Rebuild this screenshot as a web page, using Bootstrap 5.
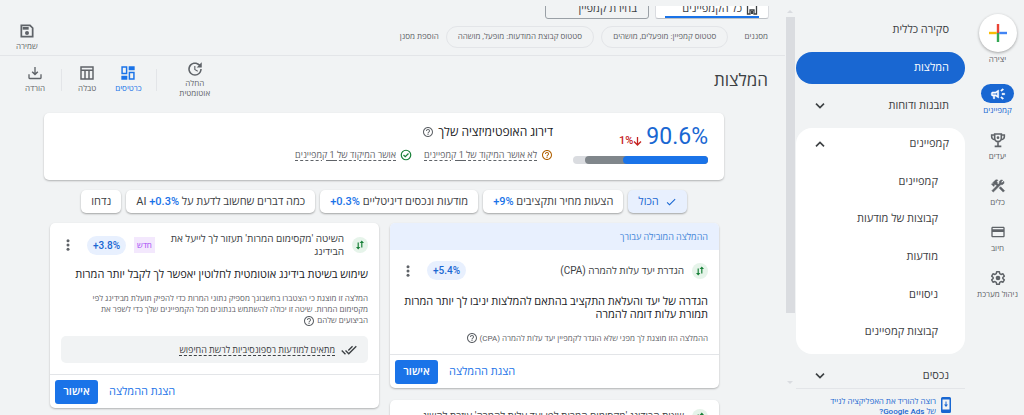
<!DOCTYPE html>
<html lang="he" dir="rtl">
<head>
<meta charset="utf-8">
<meta name="viewport" content="width=device-width, initial-scale=1">
<title>המלצות</title>
<link rel="stylesheet" href="https://cdn.jsdelivr.net/npm/bootstrap@5.3.0/dist/css/bootstrap.min.css">
<style>
:root{--blue:#1a73e8;--deep:#1967d2;--ink:#3c4043;--grey:#5f6368;--line:#e3e5e8;--pale:#e8f0fe}
body{background:#f1f3f4;color:var(--ink);font-family:Roboto,"Open Sans","Noto Sans",sans-serif;font-size:11px;line-height:14px}
a{color:inherit;text-decoration:none}
svg{fill:currentColor;flex:none;display:block}
.ic{width:16px;height:16px}
.ic-s{width:12px;height:12px}
.ltr{direction:ltr;unicode-bidi:isolate}
button{color:inherit}
.plain{border:0;background:none;padding:0}
.mb-6{margin-bottom:6px}
.gap-6{gap:6px}
.gap-2px{gap:2px}
.gap-12{gap:12px}
.push-end{margin-inline-start:auto}

.rail{width:59px;padding-top:14px;color:var(--grey);font-size:8px;line-height:12px}
.rail-item{margin-bottom:13px;width:53px;white-space:nowrap;gap:2px}
.rail-icon{width:33px;height:19px;border-radius:10px}
.rail-item.on{color:var(--deep)}
.rail-item.on .rail-icon{background:var(--deep);color:#fff}
.rail-item.create-item{margin-bottom:18px}
.create-icon{width:38px;height:38px;box-shadow:0 1px 3px #0005}

.side{width:169px;font-weight:500}
.side-list{padding-top:14px;min-height:0}
.side-row{height:32px;padding:0 16px;border-radius:16px;width:100%}
.side-row.on{background:var(--deep);color:#fff}
.side-group{border-radius:16px;padding-bottom:3px}
.side-sub{display:grid;grid-auto-rows:1fr;height:188px;margin-top:3px;padding:0 27px}
.side-foot{height:27px;border-top:1px solid var(--line);color:var(--deep);font-size:8px;line-height:10px;padding:8px 13px 0}
.track{width:11px;padding:10px 1px 31px 0;color:#dadce0}
.thumb{height:296px;width:9px;background:#dadce0}

.tabs-row{margin:6px 16px 0 0;height:13px}
.scope{height:20px;border-radius:3px}
.scope-all{width:114px;padding:0 10px;border:1px solid #dadce0;border-bottom-color:#bdc1c6}
.scope-line{position:absolute;bottom:0;left:9px;right:9px;height:2px;background:var(--blue)}
.scope-pick{width:104px;border:1px solid #9aa0a6;padding:0 11px}
.filters{height:37px;border-bottom:1px solid var(--line);padding:0 17px 0 16px;color:var(--grey);font-size:8px}
.filter-pill{height:22px;border:1px solid var(--line);border-radius:11px;padding:0 11px}
.pill-first{margin-inline-start:16px}
.pill-next{margin-inline-start:7px}
.save{gap:4px}
.tool{font-size:8px;line-height:10px;color:var(--grey);gap:3px}
.tool.on{color:var(--blue)}
.head{height:57px;padding:0 17px 10px 25px}
.head h1{font-size:17px;line-height:20px;margin:0;color:var(--ink)}
.tool-sep{width:1px;height:22px;background:var(--line)}
.tool-auto{width:44px;gap:1px}
.sep-wide{margin:0 16px 0 14px}
.sep-slim{margin:0 16px}
.tool-next{margin-inline-start:19px}

.content{padding:0 61px 0 44px}
.panel{background:#fff;border-radius:5px;box-shadow:0 1px 2px #0004}
.score{height:67px;padding:11px 16px 0}
.score-num{font-size:23px;line-height:26px;color:var(--deep)}
.score-bar{width:135px;height:8px;border-radius:4px;background:#dadce0;margin-top:6px}
.score-bar .today,.score-bar .base{background:#80868b;border-radius:4px;height:8px}
.score-bar .base{background:var(--blue)}
.score h2{font-size:12px;line-height:16px;margin:0;color:#202124}
.score h2 svg{color:var(--grey)}
.score-text{margin-inline-start:20px}
.drop{color:#c5221f;font-weight:500;padding-bottom:2px}
.checks{gap:12px;margin-top:8px;font-size:9px;color:var(--grey)}
.amber{color:#b06000}
.green{color:#188038}
.dash{text-decoration:underline dashed;text-underline-offset:2px}
.topics{gap:5px;margin-top:10px}
.topic{height:23px;padding:0 10px;border:0;border-radius:5px;background:#fff;box-shadow:0 1px 2px #0005;white-space:nowrap}
.topic.on{background:var(--pale);color:var(--deep)}
.topic .ltr{color:var(--blue);font-weight:500}
.reco-grid{display:grid;grid-template-columns:1fr 1fr;gap:12px 11px;padding:0 5px 0 6px;margin-top:10px}
.lead-band{height:27px;background:var(--pale);color:#4285d8;padding:0 11px;font-size:9px}
.kind{width:16px;height:16px;background:#e6f4ea;color:#188038}
.gain{height:19px;padding:0 6px;border-radius:10px;background:var(--pale);color:var(--deep);font-weight:500}
.new-tag{background:#f3e8fd;color:#a142f4;height:16px;padding:0 3px;font-size:8px}
.reco-body{padding:0 11px}
.reco-top{font-size:10px;line-height:13px;padding-left:1px;gap:8px}
.reco-body h3{font-size:11px;line-height:13px;font-weight:500;margin:0;color:#202124}
.reco-body p{font-size:8px;line-height:11px;margin:0;color:var(--grey);max-width:290px}
.more{color:var(--grey);margin-inline-start:5px}
.one{padding-top:11px;padding-bottom:10px}
.one h3{margin-top:15px}
.one p{margin-top:11px}
.two{padding-top:9px;padding-bottom:11px}
.two h3{margin-top:10px}
.two p{margin-top:12px;margin-bottom:9px}
.two p svg{vertical-align:top}
.three{padding-top:9px;padding-bottom:40px}
.kind-name{max-width:175px}
.fit{height:27px;border-radius:5px;background:#f1f3f4;padding:0 11px;font-size:9px;gap:6px}
.reco-foot{height:34px;border-top:1px solid var(--line);padding-left:5px;gap:11px;color:var(--blue);font-weight:500;justify-content:flex-end}
.approve{width:43px;height:24px;background:var(--blue);color:#fff;border:0;border-radius:3px;padding:0;font-weight:600}
</style>
</head>
<body>
<svg width="0" height="0" class="position-absolute" aria-hidden="true">
<symbol id="help" viewBox="0 0 24 24"><path d="M11 18h2v-2h-2v2zm1-16C6.480 2 2 6.480 2 12s4.480 10 10 10 10-4.480 10-10S17.520 2 12 2zm0 18c-4.410 0-8-3.590-8-8s3.590-8 8-8 8 3.590 8 8-3.590 8-8 8zm0-14c-2.210 0-4 1.790-4 4h2c0-1.100.9-2 2-2s2 .9 2 2c0 2-3 1.750-3 5h2c0-2.250 3-2.500 3-5 0-2.210-1.790-4-4-4z"/></symbol>
<symbol id="down" viewBox="0 0 24 24"><path d="M6 8.500l6 6 6-6" fill="none" stroke="currentColor" stroke-width="2.400"/></symbol>
<symbol id="up" viewBox="0 0 24 24"><path d="M6 15.500l6-6 6 6" fill="none" stroke="currentColor" stroke-width="2.400"/></symbol>
<symbol id="dots" viewBox="0 0 24 24"><circle cx="12" cy="3.500" r="3"/><circle cx="12" cy="12" r="3"/><circle cx="12" cy="20.500" r="3"/></symbol>
<symbol id="swap" viewBox="0 0 16 16"><path d="M9.800 3.500 12 6h-1.600v4.500H9.200V6H7.600zM6.200 12.500 4 10h1.600V5.500h1.200V10h1.600z"/></symbol>
</svg>
<div class="d-flex vh-100 overflow-hidden">
  <nav class="rail d-flex flex-column flex-shrink-0" aria-label="ראשי">
    <button class="plain rail-item create-item d-flex flex-column align-items-center"><span class="create-icon rounded-circle bg-white d-flex align-items-center justify-content-center"><svg width="18" height="18" viewBox="0 0 18 18"><path fill="#ea4335" d="M7.800 0h2.400v9H7.800z"/><path fill="#fbbc04" d="M0 7.800h7.800v2.400H0z"/><path fill="#34a853" d="M7.800 9h2.400v9H7.800z"/><path fill="#4285f4" d="M10.200 7.800H18v2.400h-7.800z"/></svg></span>יצירה</button>
    <a href="#" class="rail-item on d-flex flex-column align-items-center"><span class="rail-icon d-flex align-items-center justify-content-center"><svg class="ic" viewBox="0 0 24 24"><path stroke="currentColor" stroke-width=".8" d="M18 11v2h4v-2h-4zm-2 6.610c.96.710 2.210 1.650 3.200 2.390.4-.530.8-1.070 1.200-1.600-.99-.740-2.240-1.680-3.200-2.400-.4.540-.8 1.080-1.200 1.610zM20.400 5.600c-.4-.530-.8-1.070-1.200-1.600-.99.740-2.240 1.680-3.200 2.400.4.530.8 1.070 1.200 1.600.96-.720 2.210-1.650 3.200-2.400zM4 9c-1.100 0-2 .9-2 2v2c0 1.100.9 2 2 2h1v4h2v-4h1l5 3V6L8 9H4zm5.030 1.710L11 9.530v4.940l-1.970-1.180-.48-.290H4v-2h4.550l.48-.290z"/></svg></span><span>קמפיינים</span></a>
    <a href="#" class="rail-item d-flex flex-column align-items-center"><span class="rail-icon d-flex align-items-center justify-content-center"><svg class="ic" viewBox="0 0 24 24"><path fill="none" stroke="currentColor" stroke-width="2.400" d="M7 3h10v6.500a5 5 0 0 1-10 0zM7 4.500H2.500V7A4.500 4.500 0 0 0 7 11.500M17 4.500h4.500V7a4.500 4.500 0 0 1-4.500 4.500M12 15v6M7 21.500h10"/><circle cx="12" cy="8.500" r="2"/></svg></span><span>יעדים</span></a>
    <a href="#" class="rail-item d-flex flex-column align-items-center"><span class="rail-icon d-flex align-items-center justify-content-center"><svg class="ic" viewBox="0 0 24 24"><path stroke="currentColor" stroke-width=".8" d="M13.780 15.170l2.120-2.120 6 6-2.120 2.120zM17.500 10c1.930 0 3.500-1.570 3.500-3.500 0-.580-.160-1.120-.410-1.600l-2.700 2.700-1.490-1.490 2.700-2.700c-.480-.250-1.020-.410-1.600-.410C15.570 3 14 4.570 14 6.500c0 .410.080.8.210 1.160l-1.850 1.850-1.780-1.780.710-.710-1.410-1.410L12 3.490c-1.170-1.170-3.070-1.170-4.240 0L4.220 7.030l1.410 1.410H2.810l-.710.710 3.540 3.540.710-.710V9.150l1.410 1.410.710-.710 1.780 1.780-7.410 7.410 2.120 2.120L16.340 9.790c.360.130.750.210 1.160.210z"/></svg></span><span>כלים</span></a>
    <a href="#" class="rail-item d-flex flex-column align-items-center"><span class="rail-icon d-flex align-items-center justify-content-center"><svg class="ic" viewBox="0 0 24 24"><path d="M20 4H4c-1.110 0-1.990.890-1.990 2L2 18c0 1.110.890 2 2 2h16c1.110 0 2-.890 2-2V6c0-1.110-.890-2-2-2zm0 14H4v-6h16v6zm0-10H4V6h16v2z"/></svg></span><span>חיוב</span></a>
    <a href="#" class="rail-item d-flex flex-column align-items-center"><span class="rail-icon d-flex align-items-center justify-content-center"><svg class="ic" viewBox="0 0 24 24"><path fill="none" stroke="currentColor" stroke-width="2.200" stroke-linejoin="round" d="M10 2.500h4l.6 3 2 1.200 2.900-1 2 3.500-2.300 2v1.600l2.300 2-2 3.500-2.900-1-2 1.200-.6 3h-4l-.6-3-2-1.200-2.900 1-2-3.500 2.300-2v-1.600l-2.300-2 2-3.500 2.900 1 2-1.200z"/><circle cx="12" cy="12" r="3.500"/></svg></span><span>ניהול מערכת</span></a>
  </nav>

  <aside class="side d-flex flex-column flex-shrink-0">
    <div class="side-list flex-grow-1 overflow-hidden">
      <a href="#" class="side-row d-flex align-items-center mb-6">סקירה כללית</a>
      <a href="#" class="side-row on d-flex align-items-center mb-6">המלצות</a>
      <button class="plain side-row d-flex align-items-center justify-content-between mb-6">תובנות ודוחות<svg class="ic" viewBox="0 0 24 24"><use href="#down"/></svg></button>
      <div class="side-group bg-white mb-6">
        <button class="plain side-row d-flex align-items-center justify-content-between">קמפיינים<svg class="ic" viewBox="0 0 24 24"><use href="#up"/></svg></button>
        <div class="side-sub align-items-center">
          <a href="#">קמפיינים</a><a href="#">קבוצות של מודעות</a><a href="#">מודעות</a><a href="#">ניסויים</a><a href="#">קבוצות קמפיינים</a>
        </div>
      </div>
      <button class="plain side-row d-flex align-items-center justify-content-between">נכסים<svg class="ic" viewBox="0 0 24 24"><use href="#down"/></svg></button>
    </div>
    <a href="#" class="side-foot d-flex gap-1 align-items-start overflow-hidden flex-shrink-0"><svg width="12" height="16" viewBox="0 0 12 16"><path fill-rule="evenodd" d="M2.500 0h7A1.500 1.500 0 0 1 11 1.500v13A1.500 1.500 0 0 1 9.500 16h-7A1.500 1.500 0 0 1 1 14.500v-13A1.500 1.500 0 0 1 2.500 0zM2.500 2.500v10h7v-10zM5.500 4.500h1v3H8L6 10 4 7.500h1.500z"/></svg><span>רוצה להוריד את האפליקציה לנייד<br>של Google Ads?</span></a>
  </aside>

  <div class="track d-flex flex-column flex-shrink-0 align-items-center" aria-hidden="true">
    <svg width="6" height="3" viewBox="0 0 6 3"><path d="M0 3 3 0l3 3z"/></svg>
    <div class="thumb mt-1"></div>
    <svg class="mt-auto" width="6" height="3" viewBox="0 0 6 3"><path d="M0 0h6L3 3z"/></svg>
  </div>

  <main class="flex-grow-1 overflow-hidden">
    <div class="tabs-row d-flex align-items-end overflow-hidden gap-6">
      <button class="plain scope scope-all bg-white position-relative d-flex align-items-center gap-1"><svg width="12" height="12" viewBox="0 0 12 12"><path fill="none" stroke="currentColor" stroke-width="1.300" d="M1.500 0v11h2.500V7h4v4h2.500V0"/><path d="M5 8h2v3H5z"/></svg>כל הקמפיינים<span class="scope-line"></span></button>
      <button class="plain scope scope-pick d-flex align-items-center">בחירת קמפיין</button>
    </div>
    <div class="filters d-flex align-items-center">
      <span>מסננים</span>
      <button class="plain filter-pill pill-first">סטטוס קמפיין: מופעלים, מושהים</button>
      <button class="plain filter-pill pill-next">סטטוס קבוצת המודעות: מופעל, מושהה</button>
      <button class="plain pill-next">הוספת מסנן</button>
      <button class="plain tool save d-flex flex-column align-items-center push-end"><svg class="ic" viewBox="0 0 24 24"><path fill="none" stroke="currentColor" stroke-width="2.600" d="M3.500 3.500h13l4 4v13h-17z"/><path d="M5.500 6h9v4h-9z"/><circle cx="12" cy="15" r="3"/></svg>שמירה</button>
    </div>
    <header class="head d-flex align-items-center">
      <h1>המלצות</h1>
      <button class="plain tool tool-auto push-end d-flex flex-column align-items-center"><svg width="18" height="18" viewBox="0 0 24 24"><path d="M21 10.120h-6.780l2.740-2.820c-2.730-2.700-7.150-2.800-9.880-.1-2.730 2.710-2.730 7.080 0 9.790s7.150 2.710 9.880 0C18.320 15.650 19 14.080 19 12.100h2c0 1.980-.880 4.550-2.640 6.290-3.510 3.480-9.210 3.480-12.720 0-3.500-3.470-3.530-9.110-.020-12.580s9.140-3.470 12.650 0L21 3v7.120zM12.500 8v4.250l3.500 2.080-.720 1.210L11 13V8h1.500z"/></svg>החלה אוטומטית</button>
      <span class="tool-sep sep-wide"></span>
      <button class="plain tool on d-flex flex-column align-items-center"><svg class="ic" viewBox="0 0 24 24"><path d="M13 2h9v6h-9zM2 16h9v6H2z"/><path fill="none" stroke="currentColor" stroke-width="2.200" d="M3.100 3.100h6.800v9.800H3.100zM14.100 11.100h6.800v9.800h-6.800z"/></svg>כרטיסים</button>
      <button class="plain tool d-flex flex-column align-items-center tool-next"><svg class="ic" viewBox="0 0 24 24"><path fill="none" stroke="currentColor" stroke-width="2.200" d="M3 3h18v18H3zM3 8h18M9 8v13M15 8v13"/></svg>טבלה</button>
      <span class="tool-sep sep-slim"></span>
      <button class="plain tool d-flex flex-column align-items-center"><svg class="ic" viewBox="0 0 24 24"><path d="M20 14v5H4v-5H2v5c0 1.300.9 2.200 2 2.200h16c1.100 0 2-.9 2-2.200v-5zm-3-3.200-1.500-1.500L13 11.800V3h-2v8.800L8.500 9.300 7 10.800l5 5z"/></svg>הורדה</button>
    </header>

    <div class="content">
      <section class="panel score d-flex align-items-start">
        <div>
          <div class="d-flex align-items-end gap-1"><span class="score-num ltr">90.6%</span><span class="drop d-flex align-items-center"><svg width="9" height="10" viewBox="0 0 9 10"><path fill="none" stroke="currentColor" stroke-width="1.300" d="M4.500 1v8M1 5.500 4.500 9 8 5.500"/></svg><span class="ltr">1%</span></span></div>
          <div class="score-bar"><div class="today" style="width:91%"><div class="base" style="width:69%"></div></div></div>
        </div>
        <div class="score-text">
          <h2 class="d-flex align-items-center gap-1">דירוג האופטימיזציה שלך <svg class="ic-s"><use href="#help"/></svg></h2>
          <div class="d-flex checks">
            <span class="d-flex align-items-center gap-1"><svg class="ic-s amber"><use href="#help"/></svg><a href="#" class="dash">לא אושר המיקוד של 1 קמפיינים</a></span>
            <span class="d-flex align-items-center gap-1"><svg class="ic-s green" viewBox="0 0 24 24"><path fill="none" stroke="currentColor" stroke-width="2.400" d="M12 2.500a9.500 9.500 0 1 0 0 19 9.500 9.500 0 0 0 0-19zM7 12l3.500 3.500L17 9"/></svg><a href="#" class="dash">אושר המיקוד של 1 קמפיינים</a></span>
          </div>
        </div>
      </section>

      <div class="d-flex justify-content-center topics">
        <button class="topic on d-flex align-items-center gap-6"><svg class="ic-s" viewBox="0 0 24 24"><path d="M9 16.170 4.830 12l-1.420 1.410L9 19 21 7l-1.410-1.410z"/></svg>הכול</button>
        <button class="topic">הצעות מחיר ותקציבים <span class="ltr">+9%</span></button>
        <button class="topic">מודעות ונכסים דיגיטליים <span class="ltr">+0.3%</span></button>
        <button class="topic">כמה דברים שחשוב לדעת על <span class="ltr">+0.3%</span> AI</button>
        <button class="topic">נדחו</button>
      </div>

      <div class="reco-grid align-items-start">
        <div class="d-grid gap-12">
          <article class="panel overflow-hidden">
            <div class="lead-band d-flex align-items-center">ההמלצה המובילה עבורך</div>
            <div class="reco-body one">
              <div class="reco-top d-flex align-items-center">
                <span class="kind rounded-circle"><svg class="ic"><use href="#swap"/></svg></span>
                <span class="flex-grow-1">הגדרת יעד עלות להמרה (CPA)</span>
                <span class="gain ltr d-flex align-items-center">+5.4%</span>
                <button class="plain more" aria-label="אפשרויות נוספות"><svg class="ic-s"><use href="#dots"/></svg></button>
              </div>
              <h3>הגדרה של יעד והעלאת התקציב בהתאם להמלצות יניבו לך יותר המרות תמורת עלות דומה להמרה</h3>
              <p class="d-flex align-items-center gap-2px">ההמלצה הזו מוצגת לך מפני שלא הוגדר לקמפיין יעד עלות להמרה (CPA) <svg class="ic-s"><use href="#help"/></svg></p>
            </div>
            <div class="reco-foot d-flex align-items-center"><a href="#">הצגת ההמלצה</a><button class="approve">אישור</button></div>
          </article>
          <article class="panel">
            <div class="reco-body three">
              <div class="reco-top d-flex align-items-start">
                <span class="kind rounded-circle"><svg class="ic"><use href="#swap"/></svg></span>
                <span class="flex-grow-1">שיטת הבידינג 'מקסימום המרות לפי יעד עלות להמרה' עוזרת להשיג</span>
              </div>
            </div>
          </article>
        </div>
        <article class="panel overflow-hidden">
          <div class="reco-body two">
            <div class="reco-top d-flex align-items-center">
              <span class="kind rounded-circle flex-shrink-0"><svg class="ic"><use href="#swap"/></svg></span>
              <span class="kind-name">השיטה 'מקסימום המרות' תעזור לך לייעל את הבידינג</span>
              <span class="new-tag d-flex align-items-center push-end">חדש</span>
              <span class="gain ltr d-flex align-items-center">+3.8%</span>
              <button class="plain more" aria-label="אפשרויות נוספות"><svg class="ic-s"><use href="#dots"/></svg></button>
            </div>
            <h3>שימוש בשיטת בידינג אוטומטית לחלוטין יאפשר לך לקבל יותר המרות</h3>
            <p>המלצה זו מוצגת כי הצטברו בחשבונך מספיק נתוני המרות כדי להפיק תועלת מבידינג לפי מקסימום המרות. שיטה זו יכולה להשתמש בנתונים מכל הקמפיינים שלך כדי לשפר את הביצועים שלהם <svg class="ic-s d-inline-block"><use href="#help"/></svg></p>
            <div class="fit d-flex align-items-center"><svg class="ic" viewBox="0 0 24 24"><path d="M18 7l-1.410-1.410-6.340 6.340 1.410 1.410L18 7zm4.240-1.410L11.660 16.170 7.480 12l-1.410 1.410L11.660 19l12-12-1.420-1.410zM.41 13.410 6 19l1.410-1.410L1.830 12 .41 13.410z"/></svg><a href="#" class="dash">מתאים למודעות רספונסיביות לרשת החיפוש</a></div>
          </div>
          <div class="reco-foot d-flex align-items-center"><a href="#">הצגת ההמלצה</a><button class="approve">אישור</button></div>
        </article>
      </div>
    </div>
  </main>
</div>
<script src="https://cdn.jsdelivr.net/npm/bootstrap@5.3.0/dist/js/bootstrap.bundle.min.js"></script>
</body>
</html>
